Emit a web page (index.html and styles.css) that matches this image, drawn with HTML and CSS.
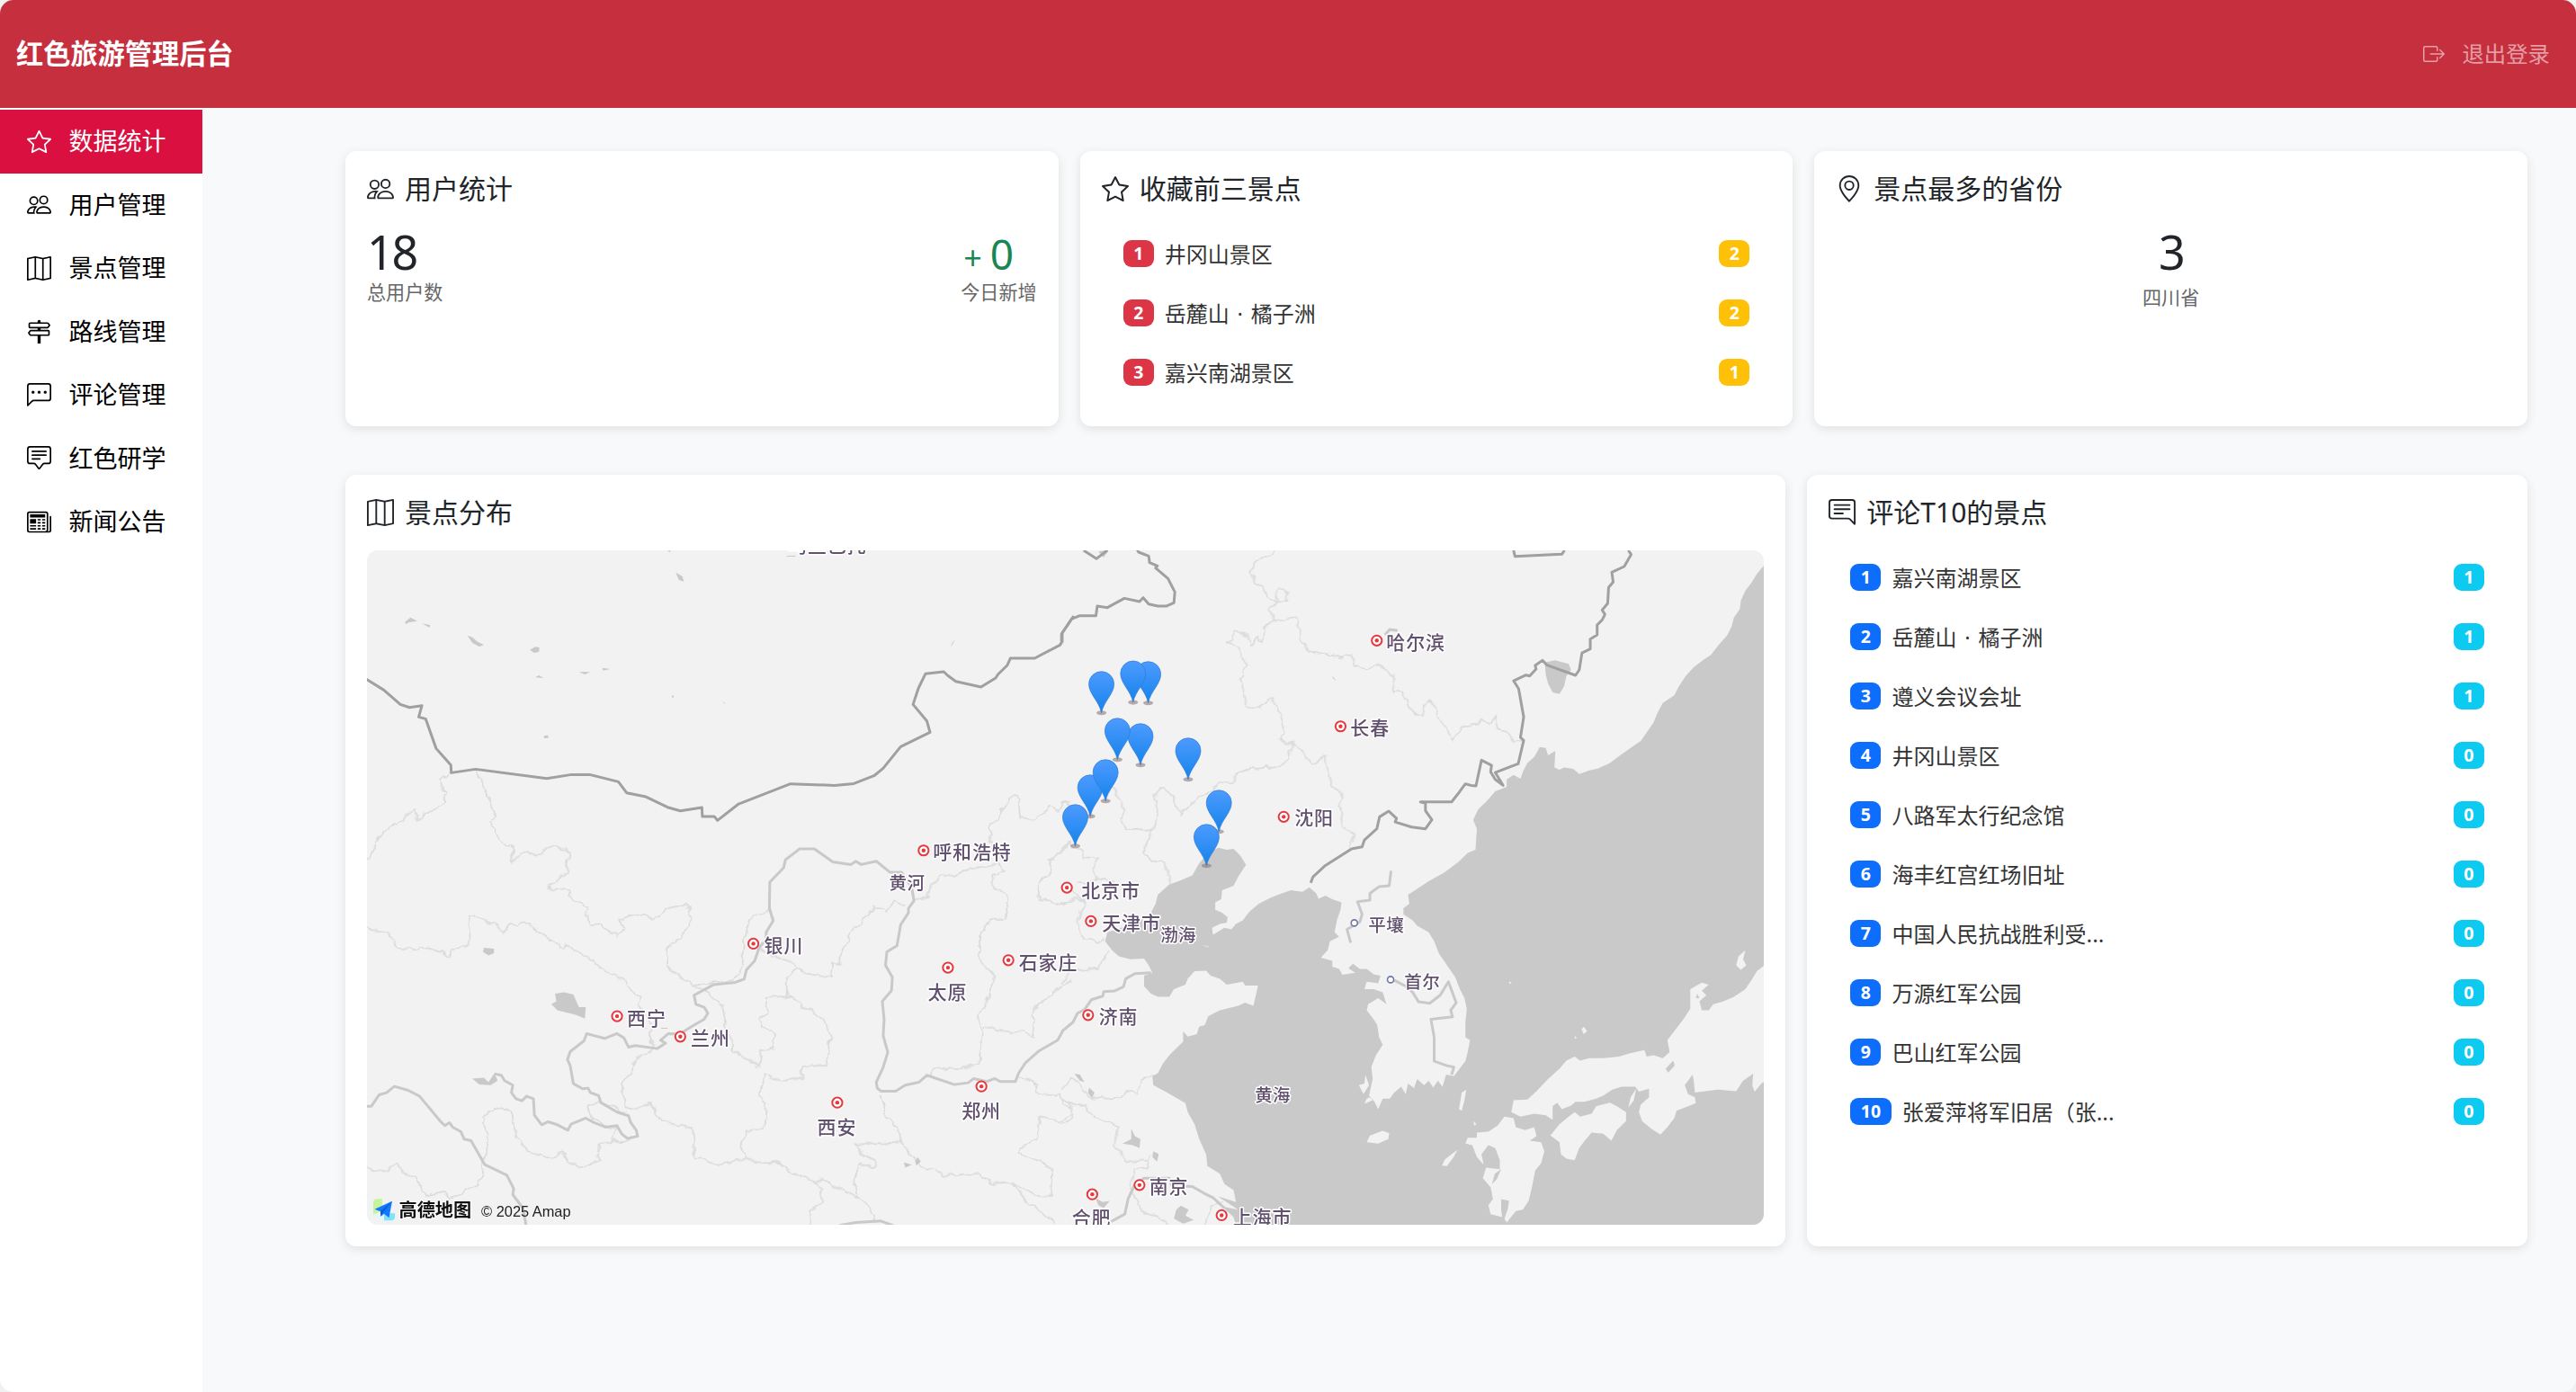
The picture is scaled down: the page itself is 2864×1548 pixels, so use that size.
FILE: index.html
```html
<!DOCTYPE html>
<html lang="zh-CN">
<head>
<meta charset="utf-8">
<title>红色旅游管理后台</title>
<link rel="stylesheet" href="styles.css">
</head>
<body>
<svg class="sprite" aria-hidden="true">
  <symbol id="i-star" viewBox="0 0 16 16"><path d="M2.866 14.85c-.078.444.36.791.746.593l4.39-2.256 4.389 2.256c.386.198.824-.149.746-.592l-.83-4.73 3.522-3.356c.33-.314.16-.888-.282-.95l-4.898-.696L8.465.792a.513.513 0 0 0-.927 0L5.354 5.12l-4.898.696c-.441.062-.612.636-.283.95l3.523 3.356-.83 4.73zm4.905-2.767-3.686 1.894.694-3.957a.565.565 0 0 0-.163-.505L1.71 6.745l4.052-.576a.525.525 0 0 0 .393-.288L8 2.223l1.847 3.658a.525.525 0 0 0 .393.288l4.052.575-2.906 2.77a.565.565 0 0 0-.163.506l.694 3.957-3.686-1.894a.503.503 0 0 0-.461 0z"/></symbol>
  <symbol id="i-people" viewBox="0 0 16 16"><path d="M15 14s1 0 1-1-1-4-5-4-5 3-5 4 1 1 1 1zm-7.978-1L7 12.996c.001-.264.167-1.03.76-1.72C8.312 10.629 9.282 10 11 10c1.717 0 2.687.63 3.24 1.276.593.69.758 1.457.76 1.72l-.008.002-.014.002zM11 7a2 2 0 1 0 0-4 2 2 0 0 0 0 4m3-2a3 3 0 1 1-6 0 3 3 0 0 1 6 0M6.936 9.28a6 6 0 0 0-1.23-.247A7 7 0 0 0 5 9c-4 0-5 3-5 4q0 1 1 1h4.216A2.24 2.24 0 0 1 5 13c0-1.01.377-2.042 1.09-2.904.243-.294.526-.569.846-.816M4.92 10A5.5 5.5 0 0 0 4 13H1c0-.26.164-1.03.76-1.724.545-.636 1.492-1.256 3.16-1.275ZM1.5 5.5a3 3 0 1 1 6 0 3 3 0 0 1-6 0m3-2a2 2 0 1 0 0 4 2 2 0 0 0 0-4"/></symbol>
  <symbol id="i-map" viewBox="0 0 16 16"><path fill-rule="evenodd" d="M15.817.113A.5.5 0 0 1 16 .5v14a.5.5 0 0 1-.402.49l-5 1a.5.5 0 0 1-.196 0L5.5 15.01l-4.902.98A.5.5 0 0 1 0 15.5v-14a.5.5 0 0 1 .402-.49l5-1a.5.5 0 0 1 .196 0L10.5.99l4.902-.98a.5.5 0 0 1 .415.103M10 1.91l-4-.8v12.98l4 .8zm1 12.98 4-.8V1.11l-4 .8zm-6-.8V1.11l-4 .8v12.98z"/></symbol>
  <symbol id="i-signpost" viewBox="0 0 16 16"><path d="M7 1.414V2H2a1 1 0 0 0-1 1v2a1 1 0 0 0 1 1h5v1H2.5a1 1 0 0 0-.8.4L.725 8.7a.5.5 0 0 0 0 .6l.975 1.3a1 1 0 0 0 .8.4H7v5h2v-5h5a1 1 0 0 0 1-1V8a1 1 0 0 0-1-1H9V6h4.5a1 1 0 0 0 .8-.4l.975-1.3a.5.5 0 0 0 0-.6L14.3 2.4a1 1 0 0 0-.8-.4H9v-.586a1 1 0 0 0-2 0M13.5 3l.75 1-.75 1H2V3zm.5 5v2H2.5l-.75-1 .75-1z"/></symbol>
  <symbol id="i-chat-left-dots" viewBox="0 0 16 16"><path d="M14 1a1 1 0 0 1 1 1v8a1 1 0 0 1-1 1H4.414A2 2 0 0 0 3 11.586l-2 2V2a1 1 0 0 1 1-1zM2 0a2 2 0 0 0-2 2v12.793a.5.5 0 0 0 .854.353l2.853-2.853A1 1 0 0 1 4.414 12H14a2 2 0 0 0 2-2V2a2 2 0 0 0-2-2z"/><path d="M5 6a1 1 0 1 1-2 0 1 1 0 0 1 2 0m4 0a1 1 0 1 1-2 0 1 1 0 0 1 2 0m4 0a1 1 0 1 1-2 0 1 1 0 0 1 2 0"/></symbol>
  <symbol id="i-chat-square-text" viewBox="0 0 16 16"><path d="M14 1a1 1 0 0 1 1 1v8a1 1 0 0 1-1 1h-2.5a2 2 0 0 0-1.6.8L8 14.333 6.1 11.8a2 2 0 0 0-1.6-.8H2a1 1 0 0 1-1-1V2a1 1 0 0 1 1-1zM2 0a2 2 0 0 0-2 2v8a2 2 0 0 0 2 2h2.5a1 1 0 0 1 .8.4l1.9 2.533a1 1 0 0 0 1.6 0l1.9-2.533a1 1 0 0 1 .8-.4H14a2 2 0 0 0 2-2V2a2 2 0 0 0-2-2z"/><path d="M3 3.5a.5.5 0 0 1 .5-.5h9a.5.5 0 0 1 0 1h-9a.5.5 0 0 1-.5-.5M3 6a.5.5 0 0 1 .5-.5h9a.5.5 0 0 1 0 1h-9A.5.5 0 0 1 3 6m0 2.5a.5.5 0 0 1 .5-.5h5a.5.5 0 0 1 0 1h-5a.5.5 0 0 1-.5-.5"/></symbol>
  <symbol id="i-chat-right-text" viewBox="0 0 16 16"><path d="M2 1a1 1 0 0 0-1 1v8a1 1 0 0 0 1 1h9.586a2 2 0 0 1 1.414.586l2 2V2a1 1 0 0 0-1-1zm12-1a2 2 0 0 1 2 2v12.793a.5.5 0 0 1-.854.353l-2.853-2.853a1 1 0 0 0-.707-.293H2a2 2 0 0 1-2-2V2a2 2 0 0 1 2-2z"/><path d="M3 3.5a.5.5 0 0 1 .5-.5h9a.5.5 0 0 1 0 1h-9a.5.5 0 0 1-.5-.5M3 6a.5.5 0 0 1 .5-.5h9a.5.5 0 0 1 0 1h-9A.5.5 0 0 1 3 6m0 2.5a.5.5 0 0 1 .5-.5h5a.5.5 0 0 1 0 1h-5a.5.5 0 0 1-.5-.5"/></symbol>
  <symbol id="i-newspaper" viewBox="0 0 16 16"><path d="M0 2.5A1.5 1.5 0 0 1 1.5 1h11A1.5 1.5 0 0 1 14 2.5v10.528c0 .3-.05.654-.238.972h.738a.5.5 0 0 0 .5-.5v-9a.5.5 0 0 1 1 0v9a1.5 1.5 0 0 1-1.5 1.5H1.497A1.497 1.497 0 0 1 0 13.5zM12 14c.37 0 .654-.211.853-.441.092-.106.147-.279.147-.531V2.5a.5.5 0 0 0-.5-.5h-11a.5.5 0 0 0-.5.5v11c0 .278.223.5.497.5z"/><path d="M2 3h10v2H2zm0 3h4v3H2zm0 4h4v1H2zm0 2h4v1H2zm5-6h2v1H7zm3 0h2v1h-2zM7 8h2v1H7zm3 0h2v1h-2zm-3 2h2v1H7zm3 0h2v1h-2zm-3 2h2v1H7zm3 0h2v1h-2z"/></symbol>
  <symbol id="i-geo" viewBox="0 0 16 16"><path d="M12.166 8.94c-.524 1.062-1.234 2.12-1.96 3.07A32 32 0 0 1 8 14.58a32 32 0 0 1-2.206-2.57c-.726-.95-1.436-2.008-1.96-3.07C3.304 7.867 3 6.862 3 6a5 5 0 0 1 10 0c0 .862-.305 1.867-.834 2.94M8 16s6-5.686 6-10A6 6 0 0 0 2 6c0 4.314 6 10 6 10"/><path d="M8 8a2 2 0 1 1 0-4 2 2 0 0 1 0 4m0 1a3 3 0 1 0 0-6 3 3 0 0 0 0 6"/></symbol>
  <symbol id="i-logout" viewBox="0 0 16 16"><path fill-rule="evenodd" d="M10 12.5a.5.5 0 0 1-.5.5h-8a.5.5 0 0 1-.5-.5v-9a.5.5 0 0 1 .5-.5h8a.5.5 0 0 1 .5.5v2a.5.5 0 0 0 1 0v-2A1.5 1.5 0 0 0 9.5 2h-8A1.5 1.5 0 0 0 0 3.5v9A1.5 1.5 0 0 0 1.5 14h8a1.5 1.5 0 0 0 1.5-1.5v-2a.5.5 0 0 0-1 0z"/><path fill-rule="evenodd" d="M15.854 8.354a.5.5 0 0 0 0-.708l-3-3a.5.5 0 0 0-.708.708L14.293 7.5H5.5a.5.5 0 0 0 0 1h8.793l-2.147 2.146a.5.5 0 0 0 .708.708z"/></symbol>
  <symbol id="m-city" viewBox="-8 -8 16 16" overflow="visible"><circle r="5.6" fill="#fff" stroke="#e4393f" stroke-width="2"/><circle r="2.2" fill="#e4393f"/></symbol>
</svg>
<div class="app">
  <header class="topbar">
    <h1 class="brand">红色旅游管理后台</h1>
    <a class="logout"><svg class="icon"><use href="#i-logout"/></svg><span>退出登录</span></a>
  </header>
  <div class="body">
    <nav class="sidebar">
      <a class="nav-item active"><svg class="icon"><use href="#i-star"/></svg><span>数据统计</span></a>
      <a class="nav-item"><svg class="icon"><use href="#i-people"/></svg><span>用户管理</span></a>
      <a class="nav-item"><svg class="icon"><use href="#i-map"/></svg><span>景点管理</span></a>
      <a class="nav-item"><svg class="icon"><use href="#i-signpost"/></svg><span>路线管理</span></a>
      <a class="nav-item"><svg class="icon"><use href="#i-chat-left-dots"/></svg><span>评论管理</span></a>
      <a class="nav-item"><svg class="icon"><use href="#i-chat-square-text"/></svg><span>红色研学</span></a>
      <a class="nav-item"><svg class="icon"><use href="#i-newspaper"/></svg><span>新闻公告</span></a>
    </nav>
    <main class="content">
      <section class="row row-stats">
        <article class="card">
          <h2 class="card-title"><svg class="icon"><use href="#i-people"/></svg><span>用户统计</span></h2>
          <div class="user-stats">
            <div><div class="big">18</div><div class="caption">总用户数</div></div>
            <div><div class="delta"><span class="plus">+</span><span>0</span></div><div class="caption">今日新增</div></div>
          </div>
        </article>
        <article class="card">
          <h2 class="card-title"><svg class="icon"><use href="#i-star"/></svg><span>收藏前三景点</span></h2>
          <ul class="list">
            <li><span class="badge red">1</span><span class="name">井冈山景区</span><span class="badge yellow">2</span></li>
            <li><span class="badge red">2</span><span class="name">岳麓山<span class="dot">·</span>橘子洲</span><span class="badge yellow">2</span></li>
            <li><span class="badge red">3</span><span class="name">嘉兴南湖景区</span><span class="badge yellow">1</span></li>
          </ul>
        </article>
        <article class="card">
          <h2 class="card-title"><svg class="icon"><use href="#i-geo"/></svg><span>景点最多的省份</span></h2>
          <div class="province-stat"><div class="big">3</div><div class="caption">四川省</div></div>
        </article>
      </section>
      <section class="row row-detail">
        <article class="card">
          <h2 class="card-title"><svg class="icon"><use href="#i-map"/></svg><span>景点分布</span></h2>
          <div class="map">
            <svg viewBox="408 612 1553 750" preserveAspectRatio="xMinYMin slice">
              <defs>
                <linearGradient id="pinfill" x1="0" y1="0" x2="0" y2="1"><stop offset="0" stop-color="#4d9bff"/><stop offset="1" stop-color="#1583ea"/></linearGradient>
                <filter id="rough" filterUnits="userSpaceOnUse" x="400" y="600" width="1570" height="770"><feTurbulence type="fractalNoise" baseFrequency=".09" numOctaves="2" seed="4" result="n"/><feDisplacementMap in="SourceGraphic" in2="n" scale="9" xChannelSelector="R" yChannelSelector="G"/></filter>
                <g id="pin"><ellipse cx="0" cy="0" rx="5.5" ry="2.6" fill="#8d7878" opacity=".6"/><path d="M0 0C-2.5-13-14-21-14-32A14 14 0 0 1 14-32C14-21 2.500-13 0 0Z" fill="url(#pinfill)" stroke="#2f78d8" stroke-width=".7"/></g>
              </defs>
              <!-- sea, islands and eastern lakes -->
              <g transform="translate(1180 940) scale(.5102 .33333)">
                <path class="sea" d="M1531-935L1515-905 1503-875 1490-850 1480-815 1478-788 1465-760 1460-730 1450-700 1430-665 1415-635 1400-620 1378-595 1360-565 1345-530 1335-500 1310-475 1298-440 1290-410 1272-370 1262-348 1240-325 1215-298 1195-275 1170-257 1150-250 1128-238 1115-255 1095-260 1085-252 1074-260 1076-315 1060-300 1055-325 1042-328 1030-295 1015-275 1005-245 1000-222 985-235 970-220 970-195 945-180 925-145 908-120 897-85 905-55 902 15 885 25 865 55 835 90 800 120 775 145 755 165 758 195 745 210 745 230 765 250 775 268 800 290 812 320 822 360 840 400 858 440 868 480 878 510 883 545 880 590 880 640 890 650 885 690 880 720 865 750 855 770 838 765 830 805 820 785 810 808 800 785 790 800 775 780 768 810 755 795 750 830 740 805 725 825 715 845 700 845 690 880 682 855 670 835 678 780 675 740 685 700 700 665 692 640 688 600 680 580 665 550 668 530 690 510 708 530 700 490 680 480 660 480 665 455 690 460 695 435 680 430 665 412 650 412 635 395 625 410 640 425 612 432 605 412 590 405 590 385 565 375 580 350 585 320 605 305 595 290 600 250 608 215 610 190 590 180 575 168 560 178 555 160 540 140 525 155 500 150 480 160 455 175 430 195 410 220 395 250 380 262 370 280 355 275 330 298 328 275 345 262 360 258 362 240 350 225 335 215 335 190 348 180 350 150 375 135 385 105 402 65 390 35 375 12 360 15 342 8 320 25 300 60 285 100 255 120 235 130 210 165 205 195 195 225 160 260 100 290 95 320 110 350 125 370 150 380 180 378 190 400 198 425 180 435 180 470 195 495 210 505 235 505 245 480 270 465 275 445 290 420 315 418 325 435 345 445 360 465 395 455 400 468 428 468 425 490 418 535 400 525 385 535 345 550 320 570 312 600 300 605 295 630 275 638 265 620 265 655 248 680 235 700 220 730 210 760 198 770 200 800 230 825 270 860 275 890 290 930 300 980 315 1030 318 1070 345 1095 355 1130 375 1150 380 1190 340 1170 385 1215 350 1205 375 1240 380 1268 1533 1268Z"/>
                <path class="ground" d="M1533 398L1515 420 1505 445 1490 480 1465 505 1440 522 1420 530 1410 550 1395 550 1390 520 1405 500 1395 485 1410 465 1395 458 1370 480 1370 545 1355 580 1335 620 1320 650 1325 690 1310 710 1290 700 1275 705 1270 683 1250 690 1235 695 1215 705 1180 710 1150 710 1130 718 1118 705 1100 718 1085 745 1060 780 1035 820 1015 848 985 850 980 890 1000 905 1030 895 1055 900 1070 915 1070 870 1080 858 1090 880 1110 868 1120 855 1140 855 1165 845 1180 835 1200 815 1220 805 1250 805 1258 822 1280 812 1280 840 1262 865 1258 890 1265 920 1285 945 1305 965 1320 940 1335 910 1340 885 1365 870 1382 860 1380 840 1365 830 1358 800 1375 765 1378 790 1380 825 1395 822 1430 815 1470 820 1485 785 1507 762 1505 800 1510 822 1525 795 1533 785Z
                  M1165 870L1195 858 1210 870 1230 890 1230 920 1210 950 1198 985 1180 962 1155 958 1140 985 1128 1010 1118 1050 1100 1045 1088 1030 1085 990 1065 968 1085 930 1105 905 1118 890 1130 905 1155 895Z
                  M965 905L985 910 990 940 1010 950 1030 940 1035 970 1020 985 1045 990 1052 1020 1045 1060 1032 1085 1025 1140 1018 1185 1005 1215 990 1220 970 1258 965 1245 972 1215 975 1185 958 1180 958 1215 960 1240 935 1230 930 1200 940 1180 935 1140 918 1110 925 1075 955 1080 955 1050 945 1010 930 1000 915 1030 920 1065 905 1040 895 1000 880 995 885 975 905 975 905 958 930 955 950 935Z
                  M1490 350L1485 380 1492 400 1480 415 1470 400 1475 370ZM1252 812L1247 850 1235 875 1240 840ZM665 990L672 968 700 952 714 960 712 980 690 995ZM882 815L878 850 872 885 866 880 872 825ZM863 1015L855 1038 840 1070 829 1068 835 1048ZM898 920L904 930 899 935ZM1138 605L1145 620 1138 630 1133 615ZM1120 635L1122 645 1118 645ZM975 452L981 460 976 462ZM662 765L670 800 658 830 648 800 660 795ZM672 840L678 850 660 862 665 845ZM305 333L322 340 318 336Z"/>
                <path class="sea" d="M1333 718L1336 735 1322 758 1316 745ZM1053-610L1075-617 1105-605 1110-585 1100-565 1095-530 1085-505 1070-510 1060-540 1055-570ZM152 945L160 970 172 980 170 1010 155 1000 133 995 152 980ZM200 1020L212 1030 208 1055 198 1040ZM260 1202L277 1215 270 1235 288 1250 265 1262 245 1245 250 1215ZM75 1178L90 1190 105 1186 92 1210 80 1200ZM28 762L40 765 50 790 40 785ZM60 808L72 825 66 845 58 825ZM958 1080L948 1115 938 1130 944 1095ZM1385 495L1390 510 1382 510ZM80-980L102-984 92-960ZM590-566L598-550 592-556Z"/>
              </g>
              <!-- province borders -->
              <g filter="url(#rough)">
                <g transform="translate(1180 940) scale(.5102 .33333)"><path class="province" d="M466-984L425-945 415-910 425-875 440-868 443-845 455-820 490-812 492-845 475-860 470-825 465-810 452-790 463-750 490-755 513-758 520-710 522-680 545-640 580-635 615-625 632-640 640-605 667-585 690-602 722-565 722-505 745-515 758-455 785-435 792-475 808-490 822-420 855-355 870-395 910-400 915-425 930-405 945-425 950-390 990-345 1003-350M463-750L440-725 435-680 425-695 412-670 405-700 370-715 373-680 362-675 385-665 400-605 388-560 403-460 430-462 460-495 475-440 487-370 475-355 490-340 503-350 525-310 545-270 575-300 580-250 590-200 615-160 605-120 620-50 637-30 628 8M503-350L495-285 465-260 410-255 380-240 375-210 345-208 325-175 300-165 275-125 258-105 240-170 218-195 202-170 210-145 200-45 175 20 200 55 225 60 240 130M200-45L165-55 140-50 130-90 138-115 120-170 105-210M0 20L20-5 45 20 48 40 80 42 65 75 75 110 105 122 120 145 112 180M35 122L60 125 80 105M0 190L30 175 50 185 40 220 35 260 50 310 75 320 95 310M0 140L30 160 50 185M105 350L80 410 25 415 0 460M0 810L20 782 40 790 60 840 100 845 130 840 150 815 165 830 175 780 200 765M0 850L25 860 50 870 75 910 125 935 115 1000 135 1050 190 1052 195 1028M0 925L22 915 20 855M190 1052L190 1075 160 1078 155 1130 155 1160 175 1220 220 1245 240 1268M310 1266L330 1200 350 1190M0-140L15-145 25-100"/></g>
                <g transform="translate(390 520) scale(.5102 .33333)"><path class="province" d="M218 1020L193 1045 198 1070 207 1085 199 1098 203 1115 180 1140 160 1150 148 1178 137 1146 118 1165 110 1182 92 1190 60 1235 48 1280 44 1303 35 1304M272 1006L318 1163 302 1188 325 1245 350 1265 352 1310 378 1285 400 1295 418 1288 418 1270 440 1265 468 1268 477 1290 470 1350 430 1402 475 1412 482 1440 515 1465 518 1525 540 1522 578 1565 600 1535 585 1505 625 1490 660 1505 690 1470 720 1460 738 1468 742 1510 720 1570 690 1600 690 1665 742 1727 830 1708 850 1680 858 1560 870 1505 910 1470 925 1520M1568 1115L1555 1120 1545 1145 1525 1128 1485 1175 1458 1170 1455 1098 1435 1100 1432 1122 1415 1140 1412 1180 1395 1185 1390 1200 1397 1222 1388 1245 1400 1270 1418 1280"/></g>
                <g transform="translate(390 920) scale(.5102 .33333)"><path class="province" d="M35 330L48 345 82 352 100 403 125 400 140 408 165 400 190 415 215 433 222 405 248 400 262 370 257 310 262 296 285 302 333 345 350 322 362 328 378 315 395 330 425 365 465 410 470 385 480 405 505 425 525 440 545 470 600 515 610 540 635 570 625 590 635 610 655 665 650 690 660 735 645 760 622 770 615 810 590 850 595 900 607 945 655 920 675 980 745 1005 752 1100 800 1128 832 1115 860 1100 880 1115 905 1120 935 1118 960 1150 1010 1180 1030 1172 1080 1220 1105 1235 1135 1270 1143 1326M600 950L540 915 515 925 520 960 555 1000 580 1000 570 1040 585 1055 610 1040M310 935L350 945 352 985 365 1040 390 1085 440 1105 458 1080 475 1115 500 1135 540 1110 542 1055 600 1045M310 935L288 970 295 1020 297 1080 280 1190 250 1210 215 1240 205 1220 165 1230 150 1190 140 1170 115 1145 100 1125 70 1148 35 1135M890 400L905 425 930 435 965 450 985 490 1050 495 1053 450 1065 455 1065 415 1085 370 1095 345 1140 262 1165 285 1185 250 1205 255M970 470L950 500 950 565 905 565 905 620 890 640 900 670 925 690 920 740 895 745 890 800 860 770 835 745 820 670 812 600 780 550 742 527M950 565L980 590 1000 610 1030 640 1045 700 1035 795 980 797 985 835 940 845 900 825 890 890 905 930 900 1010 860 1008 850 1060 860 1100M1418 80L1410 120 1380 130 1345 140 1320 165 1290 155 1262 200 1258 235 1227 240M1410 120L1425 145 1400 160 1400 200 1433 240 1425 305 1395 310 1370 360 1370 440 1403 500 1385 590 1365 630 1380 680 1370 790 1330 808 1270 800 1268 830M1380 665L1410 675 1440 690 1465 680 1490 700 1485 660 1490 610 1530 550 1568 510M1155 890L1165 960 1195 1010 1200 1055 1150 1050 1100 1055 1115 1090 1140 1110 1140 1130 1105 1130 1098 1180 1105 1235M1200 1055L1220 1090 1240 1130 1290 1160 1370 1155 1400 1190 1440 1185 1490 1225 1525 1230 1527 1140 1478 1100 1458 1085 1460 1070 1495 1045 1500 960 1540 985 1568 960M1455 835L1480 840 1500 885 1545 890 1555 930 1568 935M1010 1180L1028 1210 1025 1250 1005 1270 1000 1326M1440 1185L1470 1240 1500 1280 1535 1320M1568 50L1520 110 1528 140 1515 165 1497 190 1500 240 1530 245 1560 255"/></g>
              </g>
              <!-- western lakes -->
              <g transform="translate(390 520) scale(.5102 .33333)">
                <path class="sea" d="M118 515L130 500 145 512 125 517 121 523ZM155 520L172 525 172 534ZM254 560L265 566 275 580 290 592 280 597 265 585ZM390 608L402 598 411 600 410 615 400 618ZM402 700L410 693 420 702ZM497 682L522 682 510 690ZM548 668L565 672 550 677ZM708 350L722 362 726 380 715 375ZM700 758L705 765 700 769ZM810 778L817 790 813 787ZM420 895L430 893 430 902 422 903ZM1317 572L1307 600 1310 585ZM950 294L970 294 968 297 950 297ZM690 277L697 277 695 283Z"/>
                <path class="sea" d="M445 1755L465 1750 485 1758 497 1800 512 1800 510 1838 490 1825 450 1810 437 1790 448 1780ZM290 1602L312 1605 312 1620 300 1627 288 1615ZM265 2038L290 2035 300 2050 313 2020 320 2045 305 2060 280 2058ZM1235 2300L1242 2315 1232 2328 1230 2315ZM1205 2318L1222 2325 1208 2335ZM638 1870L645 1870 645 1872 638 1872ZM676 1869L690 1869 690 1872 676 1872Z"/>
              </g>
              <!-- rivers -->
              <g transform="translate(390 920) scale(.5102 .33333)">
                <path class="river" d="M313 822L328 827 335 845 353 860 350 885 360 905 373 912 383 897 398 905 400 960 416 992 430 982 450 992 473 1010 480 990 512 970 530 985 555 1000 580 995 590 1022 603 1038 625 1030 622 1010 610 985 605 962 580 950 545 918 540 895 522 885 517 870 505 872 485 855 478 795 472 775 478 748 508 712 514 688 553 704 580 688 595 702 605 733 620 728 668 738 686 720 675 710 692 688 716 690 742 665 770 640 778 620 770 600 752 590 748 560 790 525 838 517 857 506 862 475 880 445 890 400 905 375 905 350 920 312 912 268 913 183 943 135 947 108 978 72 1010 72 1050 115 1090 124 1100 113 1112 124 1145 113 1175 150 1200 150 1222 200 1227 245 1215 270 1215 285 1198 325 1190 395 1168 415 1165 460 1180 500 1178 545 1158 580 1162 640 1160 695 1170 750 1160 800 1145 850 1147 870 1155 880 1187 880 1208 860 1238 850 1255 827 1315 858 1345 852 1357 838 1385 848 1403 838 1415 848 1448 848 1455 820 1470 785 1500 745 1540 710 1551 680M33 930L45 930 62 892 78 885 95 864 125 877 150 897 195 980 205 995 215 985 222 1000 240 1015 247 1040 262 1045 292 1125 340 1160 355 1205 353 1225 375 1270 382 1328M1065 1328L1100 1318 1155 1313 1182 1328"/>
              </g>
              <g transform="translate(1180 940) scale(.5102 .33333)">
                <path class="river" d="M0 622L25 590 35 560 50 548 65 515 90 503 92 488 115 486 135 472 140 445 160 428 195 425M108 1255L138 1230 145 1180 160 1130 180 1110 235 1110 240 1135 285 1138 310 1160 330 1175 355 1210M718 85L714 135 692 138 672 160 672 183 645 188 655 230 650 255 622 280 630 325M725 450L750 470 765 490 778 522 802 527 825 500 843 455 860 525 848 550 852 572 805 580 812 640 812 720 840 735 855 740 850 765M705-702L715-720 732-716"/>
                <path class="nation" d="M0-680L0-705 22-755 40-766 75-766 78-798 100-793 137-824 170-813 178-826 190-805 210-798 228-798 245-809 247-845 232-890 205-925 209-932 192-943 190-965 168-978 165-986M48-984L76-956 100-984M985-984L988-964 1090-971 1096-984M1235-984L1241-970 1226-930 1199-911 1202-878 1192-860 1190-807 1178-785 1184-770 1178-752 1167-735 1167-702 1152-688 1152-655 1134-642 1128-585 1120-567 1058-601 1048-617 1032-600 1034-588 1020-565 1012-568 985-549 996-522 1007-428 1000-360 1007-350 995-272 945-243 962-200 945-220 935-245 937-267 915-284 903-198 892-200 880-205 867-178 850-145 782-145 793-140 793-115 807-85 793-55 763-61 727-78 730-90 713-114 693-95 687-55 660-18 655 5 632 12 575 67 548 105 543 125"/>
              </g>
              <g transform="translate(390 520) scale(.5102 .33333)">
                <path class="nation" d="M33 705L72 742 108 790 128 800 155 794 148 832 163 838 186 937 218 992 219 1018 272 1006 427 1037 481 1024 520 1024 583 1048 601 1085 643 1098 690 1133 718 1145 765 1134 766 1164 792 1164 799 1177 845 1122 958 1055 1054 1060 1096 1054 1140 1028 1160 1003 1198 931 1262 883 1255 845 1225 790 1237 735 1252 688 1292 681 1300 693 1318 713 1373 732 1405 702 1410 690 1430 660 1437 636 1490 636 1545 592 1550 580 1550 552 1575 495"/>
              </g>
              <g class="cities">
                <use href="#m-city" x="1522.500" y="704.300" width="16" height="16"/><use href="#m-city" x="1482.200" y="799.700" width="16" height="16"/><use href="#m-city" x="1419" y="900.300" width="16" height="16"/><use href="#m-city" x="1018.700" y="937.700" width="16" height="16"/><use href="#m-city" x="829.500" y="1041.300" width="16" height="16"/><use href="#m-city" x="1113" y="1059.700" width="16" height="16"/><use href="#m-city" x="1045.800" y="1068" width="16" height="16"/><use href="#m-city" x="678" y="1122" width="16" height="16"/><use href="#m-city" x="748.300" y="1144.700" width="16" height="16"/><use href="#m-city" x="1083" y="1200" width="16" height="16"/><use href="#m-city" x="922.800" y="1218" width="16" height="16"/><use href="#m-city" x="1178" y="979" width="16" height="16"/><use href="#m-city" x="1204.700" y="1016.300" width="16" height="16"/><use href="#m-city" x="1201.600" y="1120.700" width="16" height="16"/><use href="#m-city" x="1258.700" y="1309.700" width="16" height="16"/><use href="#m-city" x="1206.200" y="1320" width="16" height="16"/><use href="#m-city" x="1350" y="1343.300" width="16" height="16"/>
                <circle class="capital" cx="1505.500" cy="1026.300" r="3.500"/><circle class="capital" cx="1545.800" cy="1089.300" r="3.500"/>
              </g>
              <g class="labels">
                <text x="876" y="614.500">乌兰巴托</text>
                <text x="1541" y="722">哈尔滨</text>
                <text x="1501" y="817">长春</text>
                <text x="1439" y="917">沈阳</text>
                <text x="1037" y="955.300">呼和浩特</text>
                <text class="water" x="988.500" y="988.500">黄河</text>
                <text x="849.500" y="1058.700">银川</text>
                <text x="1132.500" y="1077.500">石家庄</text>
                <text x="1031.500" y="1110.500">太原</text>
                <text x="697" y="1139.700">西宁</text>
                <text x="768" y="1161.700">兰州</text>
                <text x="1069" y="1242.500">郑州</text>
                <text x="908.500" y="1261">西安</text>
                <text x="1202" y="997.700">北京市</text>
                <text x="1225" y="1033.700">天津市</text>
                <text class="water" x="1290" y="1046.500">渤海</text>
                <text class="water" x="1521" y="1036">平壤</text>
                <text class="water" x="1561" y="1099">首尔</text>
                <text x="1221.500" y="1137.700">济南</text>
                <text class="water" x="1395" y="1224.500">黄海</text>
                <text x="1277.500" y="1327">南京</text>
                <text x="1191.500" y="1362">合肥</text>
                <text x="1370.500" y="1360.500">上海市</text>
              </g>
              <g class="pins">
                <use href="#pin" x="1224.400" y="792.700"/><use href="#pin" x="1276.400" y="781.700"/><use href="#pin" x="1259.600" y="781"/><use href="#pin" x="1267.800" y="850.700"/><use href="#pin" x="1242.200" y="844.700"/><use href="#pin" x="1320.800" y="866.700"/><use href="#pin" x="1212" y="907.700"/><use href="#pin" x="1229" y="890.700"/><use href="#pin" x="1195.300" y="940.700"/><use href="#pin" x="1355" y="924.700"/><use href="#pin" x="1341.200" y="962.700"/>
              </g>
              <g class="attribution">
                <path d="M419 1333h6v12l-10 7v-14q0-5 4-5z" fill="#c4f59a"/><path d="M427 1349h12v4q0 4-4 4h-8z" fill="#7fe3fb"/><path d="M414 1350l11 7v-9z" fill="#e3f9ff"/><path d="M436 1335.500l-3.500 18.500-5.500-4.500-3.500 3-.5-5.500-6.500-2.500z" fill="#1478ff"/><path d="M436 1335.500l-13 11.500 .5 5.500 2-4z" fill="#0a5bd3"/>
                <text class="amap" x="443.500" y="1352.500">高德地图</text>
                <text class="copy" x="535" y="1352.700">© 2025 Amap</text>
              </g>
            </svg>
          </div>
        </article>
        <article class="card">
          <h2 class="card-title"><svg class="icon"><use href="#i-chat-right-text"/></svg><span>评论T10的景点</span></h2>
          <ul class="list">
            <li><span class="badge blue">1</span><span class="name">嘉兴南湖景区</span><span class="badge cyan">1</span></li>
            <li><span class="badge blue">2</span><span class="name">岳麓山<span class="dot">·</span>橘子洲</span><span class="badge cyan">1</span></li>
            <li><span class="badge blue">3</span><span class="name">遵义会议会址</span><span class="badge cyan">1</span></li>
            <li><span class="badge blue">4</span><span class="name">井冈山景区</span><span class="badge cyan">0</span></li>
            <li><span class="badge blue">5</span><span class="name">八路军太行纪念馆</span><span class="badge cyan">0</span></li>
            <li><span class="badge blue">6</span><span class="name">海丰红宫红场旧址</span><span class="badge cyan">0</span></li>
            <li><span class="badge blue">7</span><span class="name">中国人民抗战胜利受...</span><span class="badge cyan">0</span></li>
            <li><span class="badge blue">8</span><span class="name">万源红军公园</span><span class="badge cyan">0</span></li>
            <li><span class="badge blue">9</span><span class="name">巴山红军公园</span><span class="badge cyan">0</span></li>
            <li><span class="badge blue">10</span><span class="name">张爱萍将军旧居（张...</span><span class="badge cyan">0</span></li>
          </ul>
        </article>
      </section>
    </main>
  </div>
</div>
</body>
</html>
```
FILE: styles.css
```css
* { box-sizing: border-box; }

body {
  margin: 0;
  background: #f1f1f1;
  color: #212529;
  font-family: "Noto Sans", "Noto Sans CJK SC", sans-serif;
  font-size: 24px;
  line-height: 1.5;
}

.sprite { display: none; }

.app {
  display: flex;
  flex-direction: column;
  height: 1548px;
  background: #f8f9fb;
  border-radius: 15px;
  overflow: hidden;
}

.icon { width: 1em; height: 1em; fill: currentColor; flex: none; display: block; }

/* top bar */
.topbar {
  flex: none;
  display: flex;
  align-items: center;
  justify-content: space-between;
  height: 120px;
  padding: 0 29px 0 18px;
  background: #c62f3e;
}
.brand { margin: 0; font-size: 30.2px; font-weight: 700; line-height: 36px; color: #fff; }
.logout { display: flex; align-items: center; gap: 19px; color: rgba(255, 255, 255, .55); }
.logout span { font-size: 24.4px; }

.body { flex: 1; display: flex; }

/* sidebar */
.sidebar {
  flex: none;
  width: 225px;
  padding-top: 2px;
  background: #fff;
}
.nav-item {
  display: flex;
  align-items: center;
  gap: 19.5px;
  height: 70.5px;
  padding-left: 30px;
  font-size: 27px;
  line-height: 40.5px;
  color: #000;
}
.nav-item.active { background: #da1041; color: #fff; }

/* content */
.content {
  flex: 1;
  display: flex;
  flex-direction: column;
  gap: 54px;
  padding: 48px 54px 0 159px;
}
.row { display: grid; column-gap: 24px; }
.row-stats { grid-template-columns: repeat(3, 1fr); height: 306px; }
.row-detail { grid-template-columns: 2fr 1fr; height: 858px; }

.card {
  min-width: 0;
  padding: 24px;
  background: #fff;
  border-radius: 12px;
  box-shadow: 0 3px 12px rgba(0, 0, 0, .1);
}
.card-title {
  display: flex;
  align-items: center;
  gap: 12px;
  margin: 0;
  font-size: 30px;
  font-weight: 400;
  line-height: 36px;
}

.user-stats { display: flex; justify-content: space-between; padding-top: 16px; }
.province-stat { padding-top: 16px; text-align: center; }
.big { height: 65px; font-size: 52px; line-height: 72px; letter-spacing: -2.3px; }
.caption { font-size: 21.1px; line-height: 32px; color: #666; }
.province-stat .big { height: 70.5px; }
.delta {
  display: flex;
  align-items: baseline;
  gap: 9px;
  height: 65px;
  padding-left: 3px;
  color: #198754;
  font-size: 46px;
  line-height: 77px;
}
.plus { font-size: 36px; }

.list { margin: 21px 24px 0; padding: 0; list-style: none; }
.list li { display: flex; align-items: center; height: 66px; color: #333; }
.name { flex: 1; margin-left: 12px; font-family: "Noto Sans CJK SC", sans-serif; line-height: 36px; }
.dot { display: inline-block; width: 24px; text-align: center; font-family: "Noto Sans", sans-serif; line-height: 30px; }

.badge {
  height: 30px;
  padding: 0 11.5px;
  border-radius: 9px;
  color: #fff;
  font-size: 19.5px;
  font-weight: 700;
  line-height: 29px;
}
.red { background: #dc3545; }
.yellow { background: #ffc107; }
.blue { background: #0d6efd; }
.cyan { background: #0dcaf0; }

/* map */
.map { height: 750px; margin-top: 24px; border-radius: 12px; overflow: hidden; background: #f2f2f2; }
.map svg { display: block; width: 100%; height: 100%; }
.sea { fill: #c9c9c9; }
.ground { fill: #f2f2f2; }
.province, .river, .nation { fill: none; vector-effect: non-scaling-stroke; stroke-linejoin: round; }
.province { stroke: #dcdcdc; stroke-width: 1.8px; }
.river { stroke: #c9c9c9; stroke-width: 3px; }
.nation { stroke: #a0a0a0; stroke-width: 3px; }
.capital { fill: #fff; stroke: #6b77a8; stroke-width: 1.6px; }
.labels text {
  font-family: "Noto Sans CJK SC", sans-serif;
  font-size: 21px;
  letter-spacing: .9px;
  font-weight: 500;
  fill: #62506f;
  stroke: #fff;
  stroke-width: 3px;
  stroke-linejoin: round;
  paint-order: stroke;
}
.labels .water { font-size: 19.5px; letter-spacing: .4px; }
.amap { font-family: "Noto Sans CJK SC", sans-serif; font-size: 20.2px; font-weight: 700; fill: #111; stroke: #fff; stroke-width: 2px; paint-order: stroke; }
.copy { font-family: "Liberation Sans", sans-serif; font-size: 16.4px; fill: #222; }
```
